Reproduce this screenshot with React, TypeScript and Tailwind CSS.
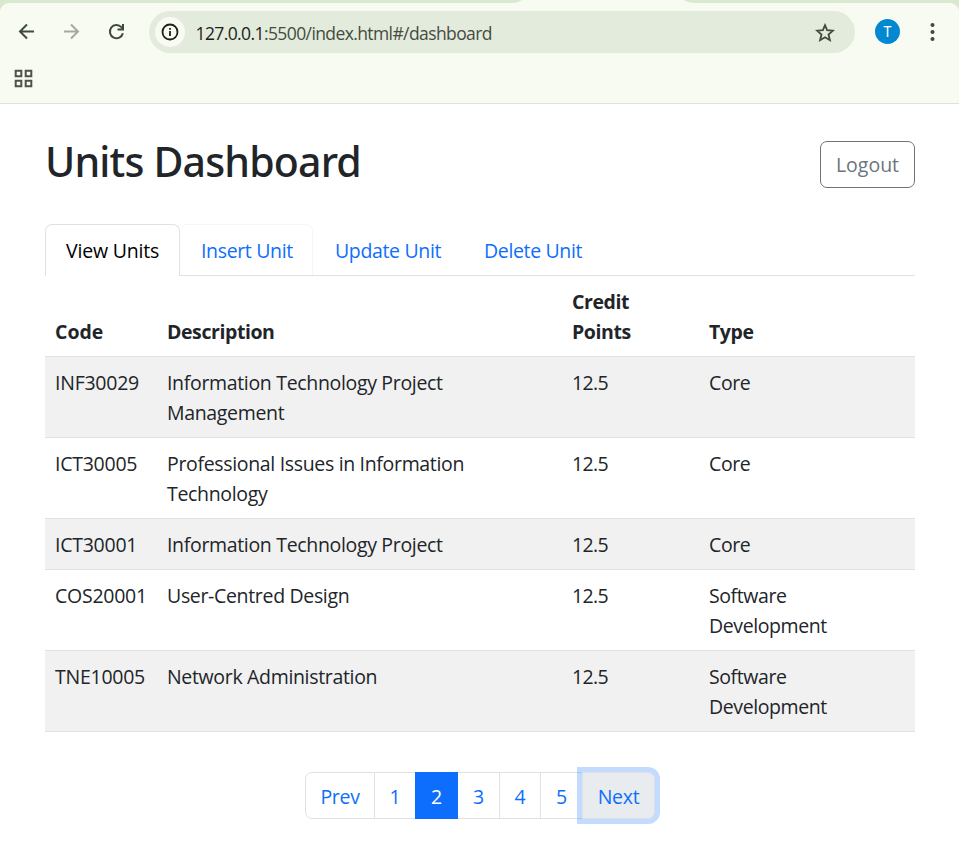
import React from "react";

type Unit = { code: string; description: string[]; points: string; type: string[] };

const units: Unit[] = [
  { code: "INF30029", description: ["Information Technology Project", "Management"], points: "12.5", type: ["Core"] },
  { code: "ICT30005", description: ["Professional Issues in Information", "Technology"], points: "12.5", type: ["Core"] },
  { code: "ICT30001", description: ["Information Technology Project"], points: "12.5", type: ["Core"] },
  { code: "COS20001", description: ["User-Centred Design"], points: "12.5", type: ["Software", "Development"] },
  { code: "TNE10005", description: ["Network Administration"], points: "12.5", type: ["Software", "Development"] },
];

function Lines({ lines }: { lines: string[] }) {
  return (
    <>
      {lines.map((line) => (
        <span key={line} className="block whitespace-nowrap">
          {line}
        </span>
      ))}
    </>
  );
}

function BrowserBar() {
  return (
    <header className="h-[104px] border-b border-[#dfe4d9] bg-[#d9e9cf]">
      <div className="flex h-[3px] pl-[510px]">
        <svg width="190" height="3" viewBox="0 0 190 3" fill="#f8fbf2">
          <path d="M0 3C6 3 9 2 12 0H174C177 2 180 3 186 3Z" />
        </svg>
      </div>
      <div className="h-[100px] rounded-t-[9px] bg-[#f8fbf2] pt-2">
        <div className="flex h-[42px] items-center">
          <svg className="ml-[18px]" width="18" height="18" viewBox="0 0 18 18" fill="none" stroke="#3f4a3c" strokeWidth="2">
            <path d="M16 8.5H2.5M9 1.5L2 8.5L9 15.5" />
          </svg>
          <svg className="ml-[27px]" width="18" height="18" viewBox="0 0 18 18" fill="none" stroke="#a5aaa0" strokeWidth="2">
            <path d="M1 8.5H14.5M8 1.5L15 8.5L8 15.5" />
          </svg>
          <svg className="ml-[27px]" width="18" height="18" viewBox="0 0 18 18" fill="none" stroke="#3f4a3c" strokeWidth="2">
            <path d="M14.9 10.2A6.6 6.6 0 1 1 13.4 4.2L15 6" />
            <path d="M15 1V6.5H9.5" />
          </svg>
          <div className="ml-[23px] flex h-[42px] w-[706px] items-center rounded-full bg-[#e3ebdc] pl-[6px] pr-5">
            <span className="flex size-[30px] items-center justify-center rounded-full bg-[#f8fbf2]">
              <svg width="18" height="18" viewBox="0 0 18 18" fill="none" stroke="#1c211a" strokeWidth="1.8">
                <circle cx="9" cy="9" r="7.5" />
                <path d="M9 8V13M9 5V6.8" />
              </svg>
            </span>
            <span className="ml-[10.5px] mt-px whitespace-nowrap text-[17.5px] leading-6 tracking-[-0.6px] text-[#454b41]">
              <span className="text-[#1c211a]">127.0.0.1</span>:5500/index.html#/dashboard
            </span>
            <svg className="ml-auto mt-px" width="20" height="20" viewBox="0 0 20 20" fill="none" stroke="#454b41" strokeWidth="1.8">
              <path d="M10 2.2L12.1 7.2L17.9 7.7L13.5 11.5L14.9 17.2L10 14.2L5.1 17.2L6.5 11.5L2.1 7.7L7.9 7.2Z" />
            </svg>
          </div>
          <span className="mb-px ml-5 flex size-[25px] items-center justify-center rounded-full bg-[#0288d1] font-[Roboto] text-[14px] text-white">T</span>
          <svg className="ml-[30px]" width="5" height="18" viewBox="0 0 5 18" fill="#3f4a3c">
            <circle cx="2.5" cy="2" r="2" />
            <circle cx="2.5" cy="9" r="2" />
            <circle cx="2.5" cy="16" r="2" />
          </svg>
        </div>
        <svg className="ml-[14px] mt-4" width="20" height="20" viewBox="0 0 20 20" fill="none" stroke="#4c5348" strokeWidth="2">
          <path d="M1.7 1.7H7.3V7.3H1.7ZM11.7 1.7H17.3V7.3H11.7ZM1.7 11.7H7.3V17.3H1.7ZM11.7 11.7H17.3V17.3H11.7Z" />
        </svg>
      </div>
    </header>
  );
}

export default function App() {
  return (
    <div className="h-[864px] w-[959px] overflow-hidden bg-white font-['Open_Sans',sans-serif] text-[19.5px] leading-[30px] text-[#212529]">
      <BrowserBar />
      <main className="pl-[45px] pr-[44px]">
        <div className="flex h-[120px] items-start justify-between pt-[37px]">
          <h1 className="-mt-[5px] whitespace-nowrap font-['Noto_Sans',sans-serif] text-[41px] font-medium leading-[50px] tracking-[-0.82px]">Units Dashboard</h1>
          <button className="h-[47px] w-[95px] rounded-[7px] border border-[#6c757d] text-[#6c757d]">Logout</button>
        </div>

        <nav className="flex h-[52px] border-b border-[#dee2e6] tracking-[-0.35px] text-[#0d6efd]">
          <a className="h-[52px] w-[135px] whitespace-nowrap rounded-t-[7px] border border-b-0 border-[#dee2e6] bg-white pl-5 pt-[11px] tracking-[-0.2px] text-black">View Units</a>
          <a className="w-[133px] whitespace-nowrap rounded-t-[7px] border border-b-0 border-l-0 border-[#f5f6f7] pl-[21px] pt-[11px]">Insert Unit</a>
          <a className="w-[149px] whitespace-nowrap pl-[22px] pt-3">Update Unit</a>
          <a className="whitespace-nowrap pl-[22px] pt-3">Delete Unit</a>
        </nav>

        <table className="w-[870px] table-fixed border-separate border-spacing-0 text-left tracking-[-0.33px]">
          <colgroup>
            <col className="w-[112px]" />
            <col className="w-[405px]" />
            <col className="w-[137px]" />
            <col className="w-[216px]" />
          </colgroup>
          <thead>
            <tr className="align-bottom tracking-[-0.42px]">
              <th className="border-b border-[#dee2e6] px-[10px] pb-[9px] pt-[11px] font-bold tracking-normal">Code</th>
              <th className="border-b border-[#dee2e6] px-[10px] pb-[9px] pt-[11px] font-bold">Description</th>
              <th className="border-b border-[#dee2e6] px-[10px] pb-[9px] pt-[11px] font-bold"><Lines lines={["Credit", "Points"]} /></th>
              <th className="border-b border-[#dee2e6] px-[10px] pb-[9px] pt-[11px] font-bold">Type</th>
            </tr>
          </thead>
          <tbody>
            {units.map((unit) => (
              <tr key={unit.code} className="align-top odd:bg-[#f1f1f1]">
                <td className="border-b border-[#dee2e6] px-[10px] pb-[9px] pt-[11px] tracking-[-0.25px]">{unit.code}</td>
                <td className="border-b border-[#dee2e6] px-[10px] pb-[9px] pt-[11px]"><Lines lines={unit.description} /></td>
                <td className="border-b border-[#dee2e6] px-[10px] pb-[9px] pt-[11px] tracking-[-0.6px]">{unit.points}</td>
                <td className="border-b border-[#dee2e6] px-[10px] pb-[9px] pt-[11px] tracking-[-0.4px]"><Lines lines={unit.type} /></td>
              </tr>
            ))}
          </tbody>
        </table>

        <div className="ml-[260px] mt-10 flex h-[47px] text-center leading-[47px] tracking-[-0.3px] text-[#0d6efd]">
          <a className="w-[70px] rounded-l-[7px] border border-[#dee2e6]">Prev</a>
          <a className="w-10 border-y border-[#dee2e6]">1</a>
          <a className="w-[43px] bg-[#0d6efd] leading-[49px] text-white">2</a>
          <a className="w-[42px] border-y border-r border-[#dee2e6]">3</a>
          <a className="w-[41px] border-y border-r border-[#dee2e6]">4</a>
          <a className="w-[41px] border-y border-[#dee2e6]">5</a>
          <a className="w-[73px] rounded-r-[7px] border border-[#dee2e6] bg-[#e9ecef] shadow-[0_0_0_5px_rgba(13,110,253,0.25)]">Next</a>
        </div>
      </main>
    </div>
  );
}
